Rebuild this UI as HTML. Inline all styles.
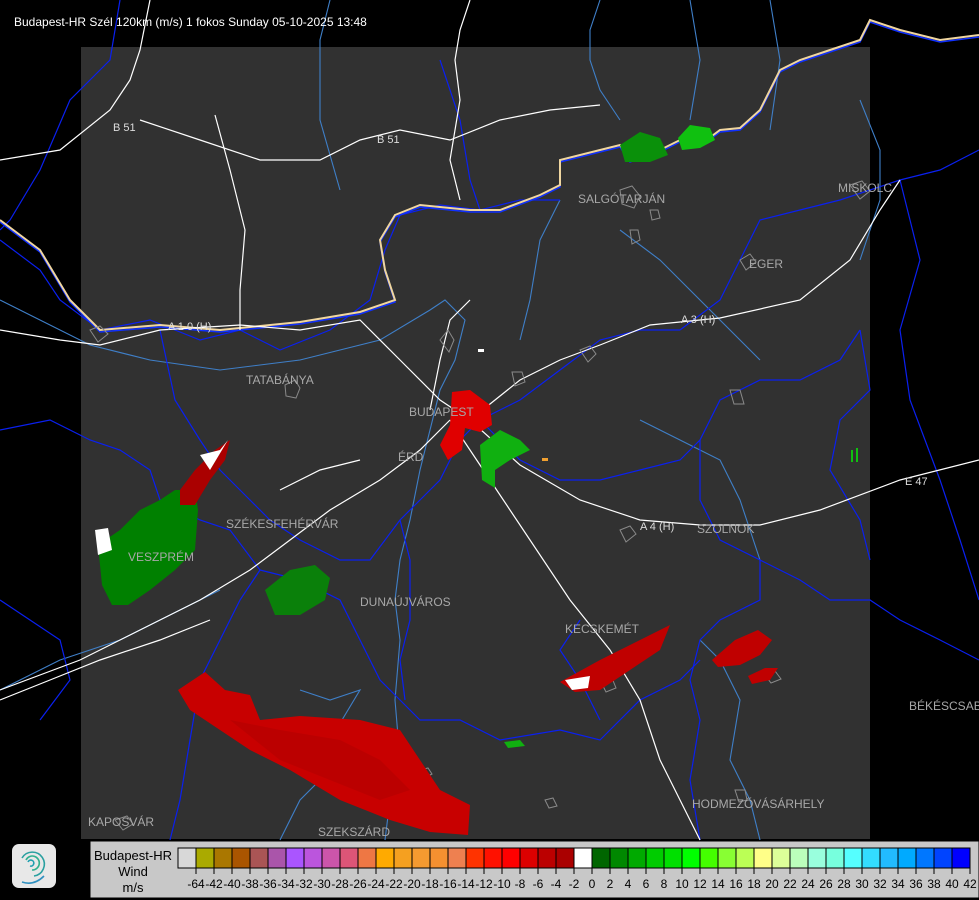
<!DOCTYPE html>
<html><head><meta charset="utf-8"><style>
html,body{margin:0;padding:0;background:#000;width:979px;height:900px;overflow:hidden}
svg{display:block}
text{font-family:"Liberation Sans",sans-serif}
</style></head><body>
<svg width="979" height="900" viewBox="0 0 979 900" xmlns="http://www.w3.org/2000/svg">
<rect width="979" height="900" fill="#000"/>
<rect x="81" y="47" width="789" height="792" fill="#313131"/>
<g fill="none" stroke="#3f7fc8" stroke-width="1.1">
<path d="M0 300 L40 320 L90 345 L150 360 L220 370 L300 360 L380 340 L430 310 L445 300 L465 320 L455 360 L440 390 L430 430 L420 470 L410 520 L400 560 L395 600 L400 640 L395 700 L400 760 L390 800 L385 840"/>
<path d="M0 690 L60 660 L120 640 L180 610 L220 590"/>
<path d="M300 690 L330 700 L360 690 L330 740 L320 780 L300 800 L280 840"/>
<path d="M770 0 L780 60 L770 130"/>
<path d="M600 0 L590 30 L590 60 L600 90 L620 120"/>
<path d="M330 0 L320 40 L320 120 L340 190"/>
<path d="M690 0 L700 60 L690 120"/>
<path d="M560 200 L540 240 L530 300 L520 340"/>
<path d="M620 230 L660 260 L700 300 L740 340 L760 360"/>
<path d="M860 100 L880 150 L880 200 L860 260"/>
<path d="M700 640 L720 660 L740 700 L730 760 L750 800 L760 840"/>
<path d="M640 420 L680 440 L720 460 L740 500 L760 560"/>
</g>
<g fill="none" stroke="#0a20f0" stroke-width="1.2">
<path d="M120 0 L110 60 L70 100 L40 170 L10 220 L0 230"/>
<path d="M0 240 L40 270 L60 300 L100 330 L150 320 L200 340 L240 330 L280 350 L330 330 L370 300 L385 250 L400 215 L440 205 L480 210 L520 200 L560 200"/>
<path d="M160 330 L175 400 L200 440 L220 470 L240 490 L270 520 L300 540 L340 560 L370 560 L400 520 L420 500 L440 480 L460 440 L480 420 L520 400 L560 370 L600 340 L640 330 L680 330"/>
<path d="M0 430 L50 420 L90 440 L120 450 L150 470 L160 500 L200 520 L230 530 L260 570 L240 600 L220 640 L200 680 L190 740 L180 800 L170 840"/>
<path d="M260 570 L300 580 L340 600 L360 640 L380 680 L400 700 L420 720 L460 720 L500 740 L560 730 L600 740 L640 700 L680 680 L700 660"/>
<path d="M400 520 L410 560 L410 620 L400 660 L405 700"/>
<path d="M480 420 L520 460 L560 480 L600 480 L640 470 L680 460 L700 440 L720 400 L760 380 L800 380 L840 360 L860 330"/>
<path d="M680 330 L720 300 L740 260 L760 220 L800 210 L840 200 L870 190 L900 180 L940 170 L979 150"/>
<path d="M700 440 L700 500 L720 540 L760 560 L760 600 L720 620 L700 640 L690 680 L700 720 L690 780 L700 840"/>
<path d="M760 560 L800 580 L830 600 L870 600 L900 620 L940 640 L979 660"/>
<path d="M900 180 L920 260 L900 330 L910 400 L940 480 L960 540 L979 600"/>
<path d="M860 330 L870 390 L840 420 L830 470 L860 520 L870 560"/>
<path d="M440 60 L460 120 L470 180 L480 210"/>
<path d="M580 620 L560 650 L580 680 L600 720"/>
<path d="M0 600 L30 620 L60 640 L70 680 L40 720"/>
</g>
<path d="M0 222 L40 252 L70 302 L100 332 L160 327 L220 332 L300 324 L360 314 L395 302 L385 272 L380 242 L395 217 L420 207 L470 212 L500 212 L540 197 L560 187 L560 162 L600 152 L620 147 L630 162 L660 152 L680 142 L700 147 L720 132 L740 130 L760 112 L770 92 L780 72 L800 62 L830 52 L860 42 L870 22 L900 32 L940 42 L979 37" fill="none" stroke="#1030ff" stroke-width="1.5"/>
<path d="M0 220 L40 250 L70 300 L100 330 L160 325 L220 330 L300 322 L360 312 L395 300 L385 270 L380 240 L395 215 L420 205 L470 210 L500 210 L540 195 L560 185 L560 160 L600 150 L620 145 L630 160 L660 150 L680 140 L700 145 L720 130 L740 128 L760 110 L770 90 L780 70 L800 60 L830 50 L860 40 L870 20 L900 30 L940 40 L979 35" fill="none" stroke="#f0d6a0" stroke-width="2"/>
<g fill="none" stroke="#ffffff" stroke-width="1.2">
<path d="M0 160 L60 150 L110 110 L130 80 L140 50 L150 0"/>
<path d="M140 120 L200 140 L260 160 L320 160 L360 140 L400 130 L450 140 L500 120 L550 110 L600 105"/>
<path d="M0 330 L60 340 L100 345 L160 330 L240 325 L300 330 L360 320 L400 360 L440 400 L470 420"/>
<path d="M470 420 L520 380 L560 360 L600 345 L650 325 L720 318 L800 300 L850 260 L880 210 L900 180"/>
<path d="M470 420 L520 465 L580 500 L640 520 L700 525 L760 525 L820 510 L900 480 L979 460"/>
<path d="M450 420 L490 480 L530 540 L570 600 L610 650 L640 700 L660 760 L680 800 L700 840"/>
<path d="M450 420 L420 450 L380 480 L330 510 L290 540 L250 570 L200 600 L140 630 L80 660 L0 690"/>
<path d="M0 700 L50 680 L100 660 L160 640 L210 620"/>
<path d="M215 115 L230 170 L245 230 L240 290 L240 330"/>
<path d="M470 0 L460 30 L455 60 L460 100 L450 160 L460 200"/>
<path d="M430 410 L440 360 L450 320 L470 300"/>
<path d="M280 490 L320 470 L360 460"/>
</g>
<g fill="none" stroke="#8a8a8a" stroke-width="1">
<path d="M285 385 l10 -5 l5 8 l-4 10 l-10 -2 z"/><path d="M440 340 l8 -10 l6 10 l-5 12 z"/><path d="M512 372 l10 0 l3 10 l-10 4 z"/>
<path d="M620 190 l12 -4 l8 10 l-6 12 l-12 -4 z"/><path d="M630 230 l8 0 l2 10 l-8 4 z"/><path d="M740 260 l10 -6 l6 8 l-10 8 z"/>
<path d="M850 185 l12 -4 l8 10 l-10 8 z"/><path d="M580 350 l10 -4 l6 8 l-8 8 z"/><path d="M730 390 l10 0 l4 14 l-10 0 z"/>
<path d="M620 530 l10 -4 l6 8 l-10 8 z"/><path d="M600 680 l12 -2 l4 10 l-10 4 z"/><path d="M765 675 l10 -4 l6 8 l-10 4 z"/>
<path d="M735 790 l10 0 l2 10 l-8 2 z"/><path d="M420 770 l8 -2 l4 6 l-8 4 z"/><path d="M90 330 l10 -4 l8 8 l-10 8 z"/>
<path d="M545 800 l8 -2 l4 8 l-8 2 z"/><path d="M115 820 l12 -4 l6 8 l-10 6 z"/><path d="M650 210 l8 0 l2 8 l-8 2 z"/>
</g>
<g>
<path d="M178 690 L205 672 L225 690 L250 695 L260 720 L300 716 L360 720 L400 730 L420 760 L440 790 L470 805 L468 835 L430 832 L390 820 L340 800 L290 770 L250 750 L220 730 L190 710 Z" fill="#c80000"/>
<path d="M230 720 L280 730 L340 740 L380 760 L410 790 L380 800 L330 780 L280 760 Z" fill="#b50000" opacity=".7"/>
<path d="M560 682 L600 660 L640 640 L670 625 L660 650 L630 670 L600 690 L575 692 Z" fill="#c00000"/>
<path d="M565 680 L590 676 L588 688 L572 690 Z" fill="#fff"/>
<path d="M712 660 L735 640 L758 630 L772 640 L760 655 L740 665 L718 667 Z" fill="#c00000"/>
<path d="M748 676 L765 668 L778 668 L770 680 L752 684 Z" fill="#c00000"/>
<path d="M98 545 L120 530 L140 510 L160 500 L175 490 L195 490 L198 510 L195 550 L175 570 L150 590 L128 605 L112 605 L102 585 Z" fill="#008000"/>
<path d="M95 530 L108 528 L112 550 L98 555 Z" fill="#fff"/>
<path d="M180 490 L195 470 L215 450 L230 440 L225 460 L210 480 L195 505 L180 505 Z" fill="#aa0000"/>
<path d="M200 455 L220 450 L228 440 L210 470 Z" fill="#fff"/>
<path d="M265 590 L290 570 L315 565 L330 578 L325 600 L300 615 L275 615 Z" fill="#0a800a"/>
<path d="M452 392 L470 390 L490 405 L492 425 L480 432 L465 428 L462 450 L448 460 L440 445 L450 425 Z" fill="#e00000"/>
<path d="M480 445 L500 430 L520 440 L530 450 L510 460 L495 470 L495 488 L482 480 Z" fill="#10b010"/>
<path d="M620 145 L640 132 L660 138 L668 155 L650 162 L625 162 Z" fill="#0a900a"/>
<path d="M678 138 L690 125 L710 128 L715 140 L700 148 L682 150 Z" fill="#10c010"/>
<path d="M504 742 L520 740 L525 746 L508 748 Z" fill="#10b010"/>
<rect x="851" y="450" width="2" height="12" fill="#10c010"/><rect x="856" y="448" width="2" height="14" fill="#10c010"/>
<rect x="542" y="458" width="6" height="3" fill="#f0a030"/>
<rect x="478" y="349" width="6" height="3" fill="#fff"/>
</g>
<g fill="#a8a8a8" font-size="12">
<text x="246" y="384">TATABÁNYA</text><text x="409" y="416">BUDAPEST</text><text x="398" y="461">ÉRD</text>
<text x="226" y="528">SZÉKESFEHÉRVÁR</text><text x="128" y="561">VESZPRÉM</text><text x="360" y="606">DUNAÚJVÁROS</text>
<text x="565" y="633">KECSKEMÉT</text><text x="578" y="203">SALGÓTARJÁN</text><text x="749" y="268">EGER</text>
<text x="838" y="192">MISKOLC</text><text x="697" y="533">SZOLNOK</text><text x="909" y="710">BÉKÉSCSABA</text>
<text x="692" y="808">HODMEZŐVÁSÁRHELY</text><text x="88" y="826">KAPOSVÁR</text><text x="318" y="836">SZEKSZÁRD</text>
</g>
<g fill="#ddd" font-size="11">
<text x="113" y="131">B 51</text><text x="377" y="143">B 51</text><text x="681" y="323">A 3 (H)</text>
<text x="640" y="530">A 4 (H)</text><text x="905" y="485">E 47</text><text x="168" y="330">A 1 0 (H)</text>
</g>
<text x="14" y="26" fill="#fff" font-size="12">Budapest-HR Szél 120km (m/s) 1 fokos Sunday 05-10-2025 13:48</text>
<rect x="12" y="844" width="44" height="44" rx="7" fill="#e8e8e8"/>
<g fill="none" stroke-width="1.6">
<path d="M34 876 A12 12 0 1 0 22 858" stroke="#2aa0a0"/>
<path d="M32 870 A7 7 0 1 0 26 860" stroke="#30b090"/>
<path d="M22 882 Q34 886 44 876" stroke="#3090c0"/>
<path d="M30 866 A3 3 0 1 0 28 862" stroke="#20a0b0"/>
</g>
<rect x="90" y="841" width="889" height="57" fill="#c8c8c8" stroke="#000"/>
<g font-size="13" fill="#000" text-anchor="middle">
<text x="133" y="860">Budapest-HR</text><text x="133" y="876">Wind</text><text x="133" y="892">m/s</text>
</g>
<g id="cells" stroke="#000" stroke-width="1"></g>
<g font-size="12" fill="#000" text-anchor="middle" id="labs"></g>
</svg>
<script>
var cols=["#d8d8d8","#aaaa00","#aa7700","#aa5500","#aa5555","#aa55aa","#aa55ff","#bb55dd","#cc55aa","#dd5577","#ee7744","#ffaa00","#f5a020","#f59a30","#f59030","#ee8050","#ff3300","#ff1100","#ff0000","#dd0000","#bb0000","#aa0000","#ffffff","#006600","#008800","#00aa00","#00cc00","#00e000","#00ff00","#44ff00","#88ff33","#bbff55","#ffff88","#ddff99","#bbffbb","#99ffdd","#77ffdd","#55ffff","#33ddff","#22bbff","#00aaff","#0077ff","#0044ff","#0000ff"];
var labs=["-64","-42","-40","-38","-36","-34","-32","-30","-28","-26","-24","-22","-20","-18","-16","-14","-12","-10","-8","-6","-4","-2","0","2","4","6","8","10","12","14","16","18","20","22","24","26","28","30","32","34","36","38","40","42"];
var ns="http://www.w3.org/2000/svg",g=document.getElementById("cells"),L=document.getElementById("labs");
for(var i=0;i<44;i++){var r=document.createElementNS(ns,"rect");r.setAttribute("x",178+18*i);r.setAttribute("y",848);r.setAttribute("width",18);r.setAttribute("height",20);r.setAttribute("fill",cols[i]);g.appendChild(r);
var x=196+18*i;var t=document.createElementNS(ns,"line");t.setAttribute("x1",x);t.setAttribute("x2",x);t.setAttribute("y1",868);t.setAttribute("y2",874);g.appendChild(t);
var tx=document.createElementNS(ns,"text");tx.setAttribute("x",x);tx.setAttribute("y",888);tx.textContent=labs[i];L.appendChild(tx);}
</script>
</body></html>
